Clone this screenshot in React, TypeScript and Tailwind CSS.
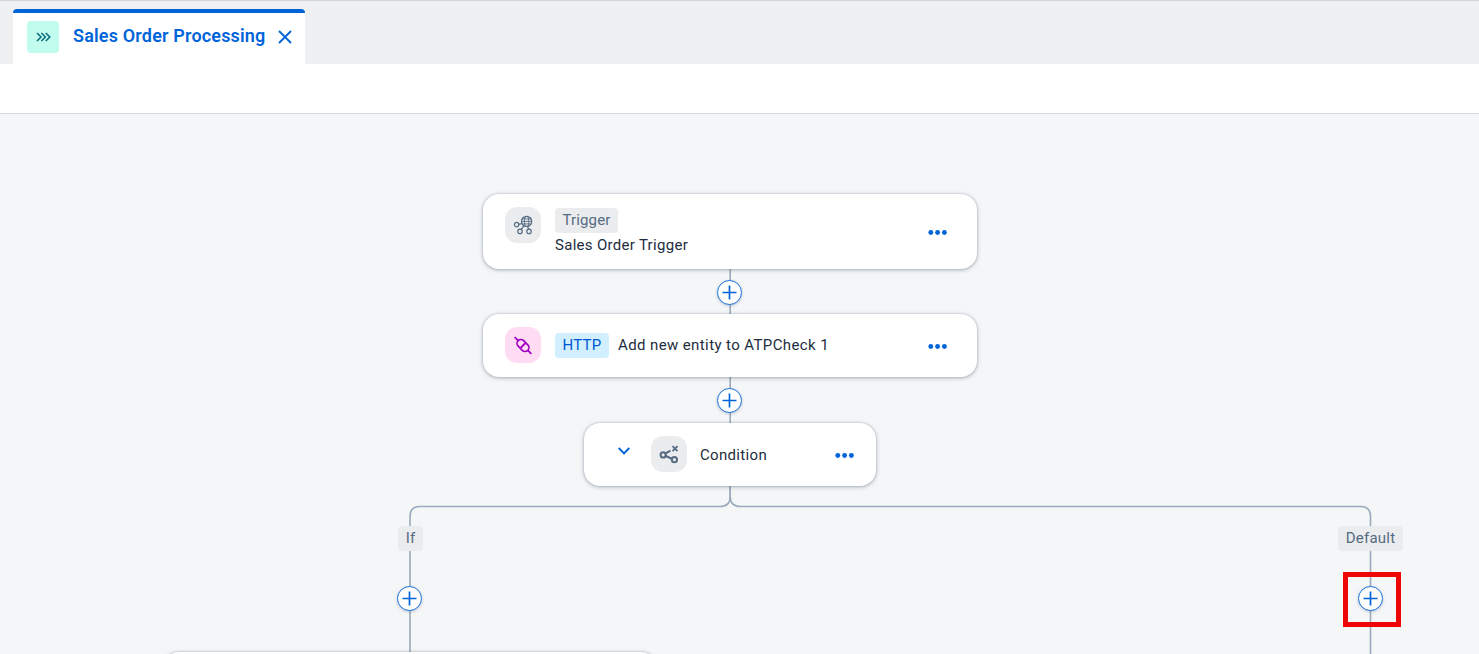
import type { ReactNode } from 'react';

function AddButton({ className }: { className: string }) {
  return (
    <button
      aria-label="Add step"
      className={`absolute flex size-[25px] items-center justify-center rounded-full border border-[#1a73dc] bg-white shadow-[0_1px_3px_rgba(85,107,130,0.35)] ${className}`}
    >
      <svg className="size-[15px] shrink-0" viewBox="0 0 15 15" fill="none" stroke="#0064d9" strokeWidth="1.7">
        <path d="M7.5 .5v14M.5 7.5h14" />
      </svg>
    </button>
  );
}

function Dots() {
  return (
    <svg className="h-[5px] w-[19px] shrink-0" viewBox="0 0 19 5" fill="#0064d9">
      <circle cx="2.8" cy="2.5" r="2.45" />
      <circle cx="9.6" cy="2.5" r="2.45" />
      <circle cx="16.4" cy="2.5" r="2.45" />
    </svg>
  );
}

function Card({ className, children }: { className: string; children?: ReactNode }) {
  return (
    <div
      className={`absolute rounded-[16px] bg-white shadow-[0_0_2px_rgba(85,107,130,0.35),0_1px_4px_rgba(60,75,90,0.38)] ${className}`}
    >
      {children}
    </div>
  );
}

function TriggerIcon() {
  return (
    <svg className="size-[20px]" viewBox="0 0 20 20" fill="none" stroke="#556b82" strokeWidth="1.2">
      <circle cx="13.6" cy="6.4" r="5.1" />
      <ellipse cx="13.6" cy="6.4" rx="2.2" ry="5.1" strokeWidth="0.9" />
      <path d="M8.6 6.4h10M9.4 3.9h8.4M9.4 8.9h8.4" strokeWidth="0.9" />
      <circle cx="3.6" cy="9.6" r="2.2" />
      <circle cx="7" cy="16.4" r="2.2" />
      <circle cx="16" cy="16.4" r="2.2" />
      <path d="M5.8 9.3l3-.8M10.7 10.8L8.2 14.6M14.7 11.4l.8 2.8" />
    </svg>
  );
}

function LinkIcon() {
  return (
    <svg className="size-[20px]" viewBox="0 0 20 20" fill="none" stroke="#a100c2" strokeWidth="1.7">
      <g transform="rotate(45 10 10.5)">
        <rect x="3.2" y="6.6" width="13.6" height="7.8" rx="3.9" />
        <path d="M-1.8 10.5h5M16.8 10.5h5" />
        <path d="M10 6.6v7.8" strokeWidth="1.8" />
      </g>
    </svg>
  );
}

function ConditionIcon() {
  return (
    <svg className="size-[20px]" viewBox="0 0 20 20" fill="none" stroke="#556b82" strokeWidth="2">
      <circle cx="4.2" cy="10.9" r="2.6" />
      <circle cx="15.4" cy="15.7" r="2.6" />
      <path d="M6.6 9.4l4.1-2.3M6.7 12l6.2 2.7" strokeLinecap="round" strokeWidth="2.2" />
      <path d="M13.5 2.1l5 5M18.5 2.1l-5 5" strokeWidth="1.8" />
    </svg>
  );
}

function Connectors() {
  return (
    <svg className="absolute top-0 left-0 h-[540px] w-[1479px]" viewBox="0 114 1479 540" fill="none" stroke="#9aabbd" strokeWidth="1.6">
      <path d="M730.2 260V430" />
      <path d="M730.2 480V496.5Q730.2 506.5 720.2 506.5H420Q410 506.5 410 516.5V654" />
      <path d="M730.2 480V496.5Q730.2 506.5 740.2 506.5H1360.5Q1370.5 506.5 1370.5 516.5V654" />
    </svg>
  );
}

export default function App() {
  return (
    <div className="flex h-[654px] w-[1479px] flex-col overflow-hidden bg-white font-['Roboto',sans-serif] text-[#1d2d3e]">
      <header className="flex h-16 shrink-0 items-end bg-[#eff0f2] pl-[13px] shadow-[inset_0_2px_1px_-1px_#cfd2d6]">
        <div className="flex h-[55px] w-[292px] items-center rounded-t-[4px] border-t-4 border-[#0064d9] bg-white pb-[4px] pl-[14px]">
          <div className="flex size-8 items-center justify-center rounded-[4px] bg-[#c2fcee]">
            <svg className="h-[10px] w-[15px]" viewBox="0 0 15 10" fill="none" stroke="#046c7a" strokeWidth="1.5">
              <path d="M1 1l4 4-4 4M5.4 1l4 4-4 4M9.8 1l4 4-4 4" />
            </svg>
          </div>
          <span className="mb-[1px] ml-[14px] w-[193px] text-[18px] leading-6 font-semibold tracking-[0.17px] whitespace-nowrap text-[#0064d9]">
            Sales Order Processing
          </span>
          <svg className="ml-[12px] size-[14px]" viewBox="0 0 14 14" fill="none" stroke="#0064d9" strokeWidth="1.8">
            <path d="M1 1l12 12M13 1L1 13" />
          </svg>
        </div>
      </header>
      <div className="h-[50px] shrink-0 border-b border-[#d5dade] bg-white" />

      <main className="relative min-h-0 flex-1 overflow-hidden bg-[#f5f6f8]">
        <Connectors />

        <Card className="top-[80px] left-[483px] flex h-[75px] w-[494px] items-start pt-[14px] pr-[30px] pl-[22px]">
          <div className="-mt-px flex size-9 shrink-0 items-center justify-center rounded-[12px] bg-[#eaecee]">
            <TriggerIcon />
          </div>
          <div className="ml-[14px] flex flex-1 flex-col items-start">
            <span className="flex h-[25px] w-[63px] items-center justify-center rounded-[4px] bg-[#eaecee] text-[15px] tracking-[0.12px] text-[#556b82]">
              Trigger
            </span>
            <span className="mt-px text-[15px] leading-[23px] tracking-[0.3px]">Sales Order Trigger</span>
          </div>
          <div className="mt-[22px] flex">
            <Dots />
          </div>
        </Card>

        <AddButton className="top-[166px] left-[717px]" />

        <Card className="top-[200px] left-[483px] flex h-[63px] w-[494px] items-center pr-[30px] pl-[22px]">
          <div className="mb-px flex size-9 shrink-0 items-center justify-center rounded-[12px] bg-[#ffdcf3]">
            <LinkIcon />
          </div>
          <span className="ml-[14px] flex h-[25px] w-[54px] items-center justify-center rounded-[4px] bg-[#d1efff] text-[15px] tracking-[0.2px] text-[#0057d2]">
            HTTP
          </span>
          <span className="ml-[9px] flex-1 text-[15px] tracking-[0.39px]">Add new entity to ATPCheck 1</span>
          <div className="mt-[2px] flex">
            <Dots />
          </div>
        </Card>

        <AddButton className="top-[274px] left-[717px]" />

        <Card className="top-[309px] left-[584px] flex h-[63px] w-[292px] items-center pr-[22px] pl-[34px]">
          <svg className="mb-[7px] h-[8px] w-[12px]" viewBox="0 0 12 8" fill="none" stroke="#0064d9" strokeWidth="1.9">
            <path d="M.7 1L6 6.4 11.3 1" />
          </svg>
          <div className="mb-px ml-[21px] flex size-9 shrink-0 items-center justify-center rounded-[12px] bg-[#eaecee]">
            <ConditionIcon />
          </div>
          <span className="mt-px ml-[13px] flex-1 text-[15px] tracking-[0.32px]">Condition</span>
          <div className="mt-[2px] flex">
            <Dots />
          </div>
        </Card>

        <span className="absolute top-[412px] left-[398px] flex h-[25px] w-[25px] items-center justify-center rounded-[4px] bg-[#eaecee] text-[15px] text-[#556b82]">
          If
        </span>
        <AddButton className="top-[472px] left-[397px]" />
        <Card className="top-[538px] left-[163px] h-[63px] w-[494px]" />

        <span className="absolute top-[412px] left-[1338px] flex h-[25px] w-[65px] items-center justify-center rounded-[4px] bg-[#eaecee] text-[15px] tracking-[0.25px] text-[#556b82]">
          Default
        </span>
        <AddButton className="top-[472px] left-[1358px]" />
        <div className="absolute top-[458px] left-[1343px] h-[55px] w-[58px] border-5 border-[#ee0505]" />
      </main>
    </div>
  );
}
